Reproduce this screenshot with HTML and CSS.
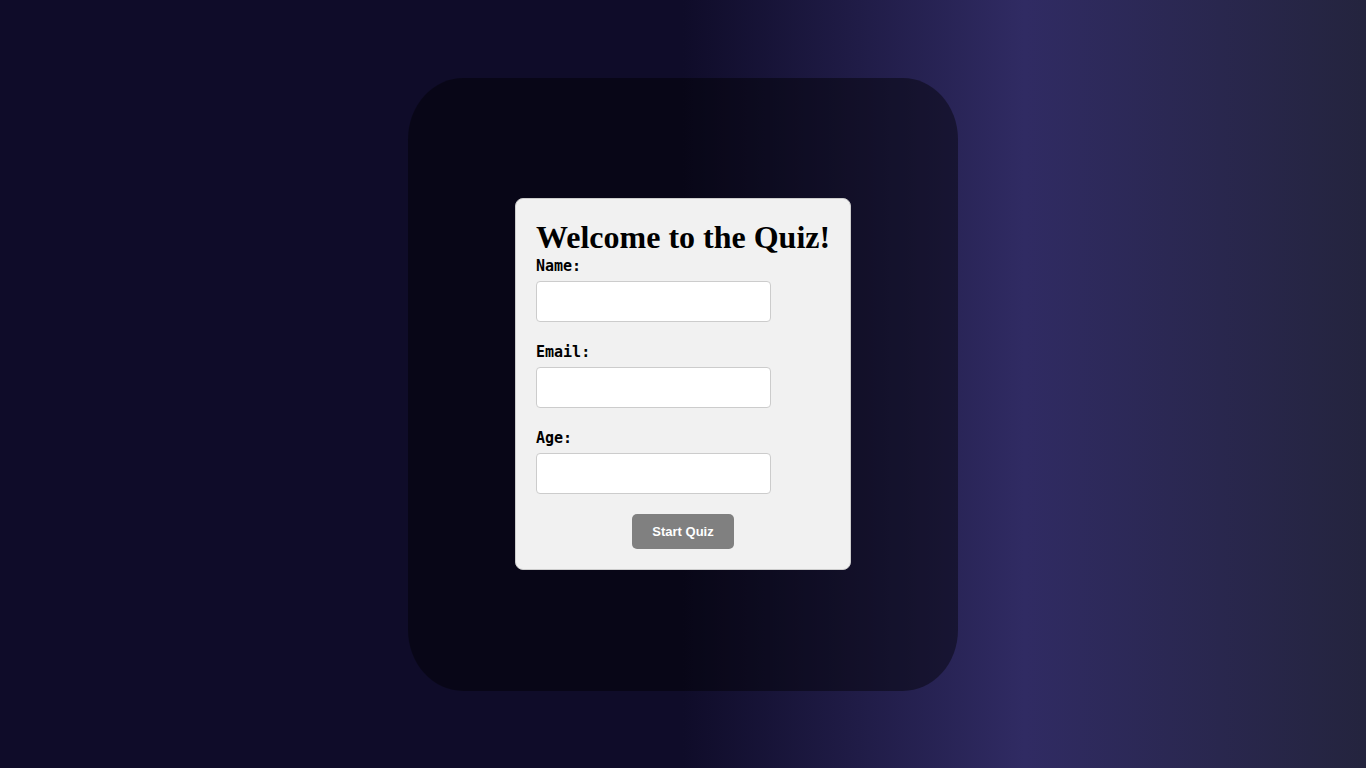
FILE: index.html
```html
<!DOCTYPE html>
<html lang="en">
<head>
<meta charset="UTF-8">
<title>Quiz</title>
<link rel="stylesheet" href="styles.css">
</head>
<body>
<main class="stage">
  <section class="card">
    <h1 class="title">Welcome to the Quiz!</h1>
    <form class="form">
      <label class="label" for="name">Name:</label>
      <input class="field" type="text" id="name">
      <label class="label" for="email">Email:</label>
      <input class="field" type="email" id="email">
      <label class="label" for="age">Age:</label>
      <input class="field" type="number" id="age">
      <div class="actions">
        <button class="btn" type="button">Start Quiz</button>
      </div>
    </form>
  </section>
</main>
</body>
</html>
```
FILE: styles.css
```css
html, body {
  margin: 0;
  height: 100%;
}
body {
  background: linear-gradient(to right, #0f0c29 0%, #0f0c29 25%, #0f0c29 50%, #302b63 75%, #24243e 100%);
  display: flex;
  align-items: center;
  justify-content: center;
}
.stage {
  width: 550px;
  height: 613px;
  border-radius: 10%;
  background: rgba(0, 0, 0, 0.42);
  display: flex;
  align-items: center;
  justify-content: center;
}
.card {
  box-sizing: border-box;
  width: 336px;
  background: #f1f1f1;
  border: 1px solid #cccccc;
  border-radius: 8px;
  padding: 20px;
}
.title {
  font-family: "Liberation Serif", "Times New Roman", serif;
  font-weight: bold;
  font-size: 32px;
  line-height: 37px;
  margin: 0;
  color: #000;
  white-space: nowrap;
}
.form {
  display: flex;
  flex-direction: column;
  align-items: flex-start;
  margin: 0;
}
.label {
  font-family: "DejaVu Sans Mono", "Liberation Mono", monospace;
  font-weight: bold;
  font-size: 15px;
  line-height: 20px;
  margin-bottom: 5px;
  color: #000;
}
.field {
  box-sizing: border-box;
  width: 235px;
  height: 41px;
  margin: 0 0 20px 0;
  padding: 8px;
  border: 1px solid #cccccc;
  border-radius: 4px;
  background: #fff;
  font-size: 14px;
}
.actions {
  align-self: stretch;
  display: flex;
  justify-content: center;
}
.btn {
  box-sizing: border-box;
  height: 35px;
  padding: 0 20px;
  width: 102px;
  border: none;
  border-radius: 5px;
  background: #808080;
  color: #fff;
  font-family: "Liberation Sans", Arial, sans-serif;
  font-weight: bold;
  font-size: 13px;
  cursor: pointer;
}
```
